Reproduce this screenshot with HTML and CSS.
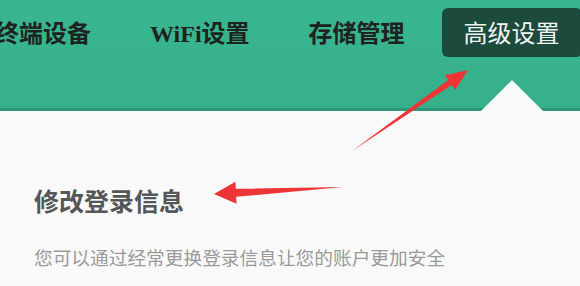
FILE: index.html
```html
<!DOCTYPE html>
<html lang="zh-CN">
<head>
<meta charset="utf-8">
<link rel="stylesheet" href="styles.css">
</head>
<body>
<div class="page">
  <header class="header">
    <nav class="nav">
      <div class="nav-item">终端设备</div>
      <div class="nav-item">WiFi设置</div>
      <div class="nav-item">存储管理</div>
      <div class="nav-item active">高级设置</div>
    </nav>
  </header>
  <main class="content">
    <h2 class="title">修改登录信息</h2>
    <p class="desc">您可以通过经常更换登录信息让您的账户更加安全</p>
  </main>
  <svg class="annot" width="580" height="286" viewBox="0 0 580 286">
    <polygon points="352,151 448.3,80.1 444.9,75.2 468,70 455.1,90 451.7,85.1" fill="#ee3535"/>
    <polygon points="343,187 235.8,188.8 235.4,181.8 214,194 236.6,203.8 236.2,196.8" fill="#ee3535"/>
  </svg>
</div>
</body>
</html>
```
FILE: styles.css
```css
* { box-sizing: border-box; }
html, body { margin: 0; padding: 0; }
body {
  width: 580px;
  height: 286px;
  overflow: hidden;
  background: #f9f9fa;
  font-family: "Liberation Serif", "Noto Sans CJK SC", serif;
}
.page { position: relative; width: 580px; height: 286px; }
.header {
  height: 111px;
  padding-top: 8px;
  background: linear-gradient(180deg, #39b691 0%, #36af8b 100%);
  border-bottom: 3px solid #2f9677;
}
.nav {
  display: flex;
  gap: 15px;
  margin-left: -27px;
}
.nav-item {
  position: relative;
  height: 49px;
  padding: 2px 22px 0 22px;
  display: flex;
  align-items: center;
  font-size: 24px;
  font-weight: bold;
  color: #1e2320;
  white-space: nowrap;
  border-radius: 6px;
  line-height: 1;
}
.nav-item.active {
  background: #1c4a3d;
  color: #f2f4f2;
  font-weight: normal;
}
.nav-item.active::after {
  content: "";
  position: absolute;
  left: 50%;
  top: 72px;
  margin-left: -31px;
  border-left: 31px solid transparent;
  border-right: 31px solid transparent;
  border-bottom: 31px solid #f9f9fa;
}
.content {
  padding: 77px 0 0 34px;
  font-family: "Noto Sans CJK SC", sans-serif;
}
.title {
  margin: 0;
  font-size: 25px;
  line-height: 25px;
  font-weight: bold;
  color: #555657;
}
.desc {
  margin: 34px 0 0 0;
  font-size: 18.7px;
  line-height: 19px;
  color: #9a9a9a;
}
.annot { position: absolute; left: 0; top: 0; pointer-events: none; }
```
